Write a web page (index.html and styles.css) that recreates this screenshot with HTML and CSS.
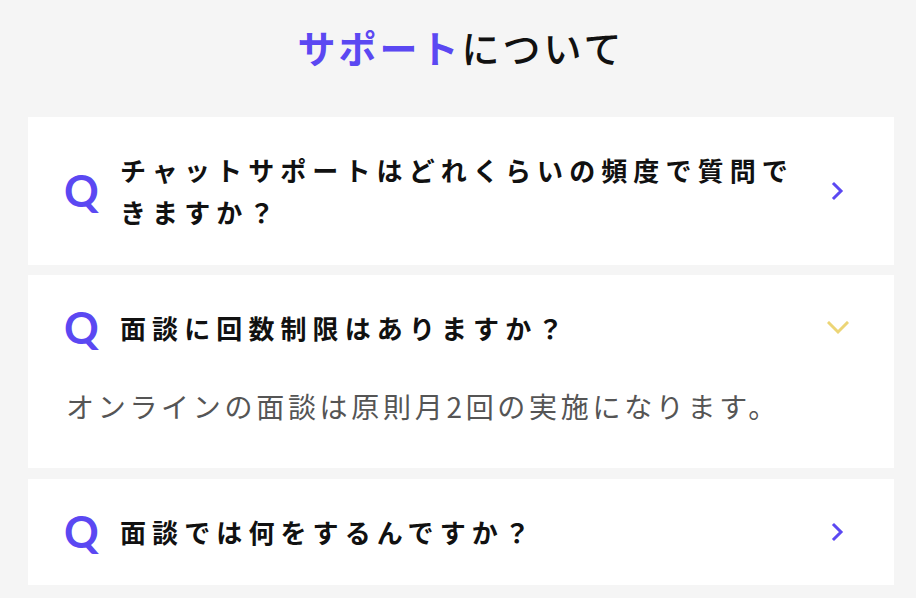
FILE: index.html
```html
<!DOCTYPE html>
<html lang="ja">
<head>
<meta charset="utf-8">
<title>サポートについて</title>
<link rel="stylesheet" href="styles.css">
</head>
<body>
<section class="faq">
  <h2 class="faq-title"><span class="accent">サポート</span>について</h2>
  <ul class="faq-list">
    <li class="faq-item">
      <div class="faq-q">
        <span class="q-mark">Q</span>
        <span class="q-text">チャットサポートはどれくらいの頻度で質問できますか？</span>
        <svg class="chev chev-right" viewBox="0 0 14 20" aria-hidden="true"><path d="M3 3 L10 10 L3 17"/></svg>
      </div>
    </li>
    <li class="faq-item open">
      <div class="faq-q">
        <span class="q-mark">Q</span>
        <span class="q-text">面談に回数制限はありますか？</span>
        <svg class="chev chev-down" viewBox="0 0 22 14" aria-hidden="true"><path d="M2 2 L11 11 L20 2"/></svg>
      </div>
      <p class="faq-a">オンラインの面談は原則月2回の実施になります。</p>
    </li>
    <li class="faq-item">
      <div class="faq-q">
        <span class="q-mark">Q</span>
        <span class="q-text">面談では何をするんですか？</span>
        <svg class="chev chev-right" viewBox="0 0 14 20" aria-hidden="true"><path d="M3 3 L10 10 L3 17"/></svg>
      </div>
    </li>
  </ul>
</section>
</body>
</html>
```
FILE: styles.css
```css
html, body {
  margin: 0;
  padding: 0;
  background: #f5f5f5;
}

body {
  font-family: "Noto Sans CJK JP", "Noto Sans", sans-serif;
  color: #111;
}

.faq {
  padding: 17px 22px 0 28px;
}

.faq-title {
  margin: 0 0 40px;
  text-align: center;
  font-size: 38px;
  line-height: 60px;
  font-weight: 500;
  letter-spacing: 3px;
  color: #111;
}

.faq-title .accent {
  color: #5b48f2;
  font-weight: 700;
}

.faq-list {
  list-style: none;
  margin: 0;
  padding: 0;
  display: flex;
  flex-direction: column;
  gap: 10px;
}

.faq-item {
  background: #fff;
  padding: 32px 36px 32px 36px;
}

.faq-item.open {
  padding-bottom: 42px;
}

.faq-item:last-child {
  margin-top: 1px;
}

.faq-q {
  display: flex;
  align-items: center;
}

.q-mark {
  flex: none;
  width: 56px;
  font-family: "Lato", "Inter", sans-serif;
  font-weight: 700;
  font-size: 43px;
  line-height: 42px;
  color: #5b48f2;
}

.q-text {
  flex: 1;
  font-size: 26px;
  line-height: 42px;
  font-weight: 700;
  letter-spacing: 6.1px;
  color: #111;
  padding-right: 24px;
}

.chev {
  flex: none;
  fill: none;
  stroke-width: 3;
  stroke-linecap: square;
}

.chev-right {
  width: 14px;
  height: 20px;
  stroke: #5b48f2;
  margin-right: 13px;
}

.chev-down {
  width: 22px;
  height: 14px;
  stroke: #ecd576;
  margin-right: 9px;
}

.faq-a {
  margin: 37px 0 0 2px;
  font-size: 28px;
  line-height: 40px;
  letter-spacing: 3.7px;
  color: #555;
  font-weight: 400;
}
```
